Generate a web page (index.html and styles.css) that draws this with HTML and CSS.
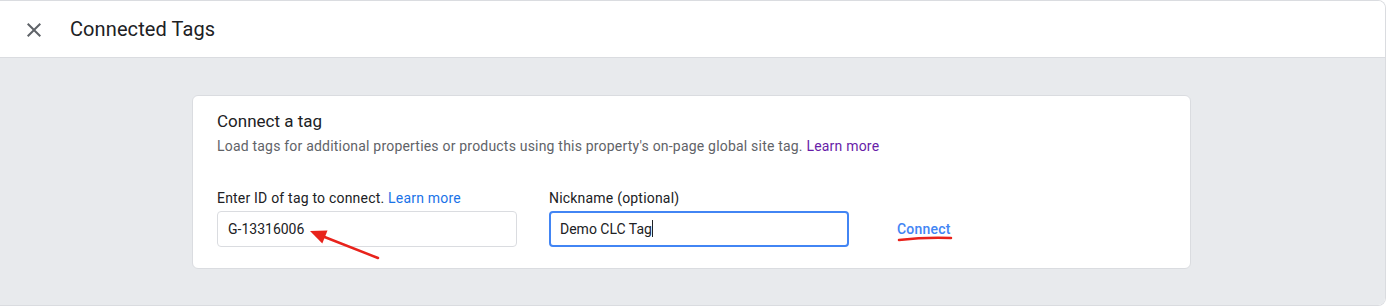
FILE: index.html
```html
<!DOCTYPE html>
<html lang="en">
<head>
    <meta charset="UTF-8">
    <meta name="viewport" content="width=device-width, initial-scale=1.0">
    <title>Connected Tags</title>
    <link rel="stylesheet" href="styles.css">
</head>
<body>

<div class="frame">
    <div class="header">
        <button class="close" aria-label="Close">
            <svg width="24" height="24" viewBox="0 0 24 24"><path d="M19 6.41L17.59 5 12 10.59 6.41 5 5 6.41 10.59 12 5 17.59 6.41 19 12 13.41 17.59 19 19 17.59 13.41 12z" fill="#5f6368"/></svg>
        </button>
        <h1>Connected Tags</h1>
    </div>

    <div class="content">
        <div class="card">
            <h2>Connect a tag</h2>
            <p class="desc">Load tags for additional properties or products using this property's on-page global site tag. <a href="#" class="visited">Learn more</a></p>

            <div class="form-row">
                <div class="field">
                    <label>Enter ID of tag to connect. <a href="#">Learn more</a></label>
                    <div class="input">G-13316006</div>
                    <svg class="arrow" width="90" height="40" viewBox="0 0 90 40">
                        <line x1="72" y1="33" x2="16" y2="11" stroke="#e8231c" stroke-width="2.5" stroke-linecap="round"/>
                        <path d="M4 6 L21.5 5.4 L16.3 18.4 Z" fill="#e8231c"/>
                    </svg>
                </div>
                <div class="field">
                    <label>Nickname (optional)</label>
                    <div class="input focused">Demo CLC Tag<span class="caret"></span></div>
                </div>
                <div class="action">
                    <button class="connect">Connect</button>
                    <svg class="underline" width="56" height="6" viewBox="0 0 56 6">
                        <path d="M2 4 Q28 1 54 2" stroke="#e8231c" stroke-width="2.5" fill="none" stroke-linecap="round"/>
                    </svg>
                </div>
            </div>
        </div>
    </div>
</div>

</body>
</html>
```

FILE: styles.css
```css
body {
    margin: 0;
    font-family: Roboto, "Liberation Sans", sans-serif;
    color: #202124;
    background: #fff;
}
.frame {
    width: 1385px;
    height: 304px;
    border: 1px solid #dadce0;
    border-left: none;
    border-radius: 0 8px 8px 0;
    overflow: hidden;
    display: flex;
    flex-direction: column;
}
.header {
    height: 56px;
    display: flex;
    align-items: center;
    background: #fff;
    border-bottom: 1px solid #dadce0;
}
.close {
    border: none;
    background: none;
    padding: 0;
    margin-left: 22px;
    width: 24px;
    height: 24px;
    margin-top: 2px;
}
.header h1 {
    font-size: 20px;
    font-weight: 400;
    margin: 0 0 0 24px;
    letter-spacing: 0.1px;
}
.content {
    flex: 1;
    background: #e8eaed;
    padding-top: 37px;
}
.card {
    width: 999px;
    margin: 0 0 0 192px;
    background: #fff;
    border: 1px solid #dadce0;
    border-radius: 6px;
    padding: 12px 24px 21px;
    box-sizing: border-box;
}
.card h2 {
    font-size: 17px;
    font-weight: 400;
    margin: 0;
    line-height: 26px;
}
.desc {
    font-size: 14px;
    color: #5f6368;
    margin: 0;
    line-height: 24px;
    letter-spacing: 0.2px;
}
a {
    color: #1a73e8;
    text-decoration: none;
}
a.visited {
    color: #681da8;
}
.form-row {
    display: flex;
    align-items: flex-end;
    margin-top: 30px;
}
.field {
    position: relative;
    width: 300px;
    margin-right: 32px;
}
.field label {
    display: block;
    font-size: 14px;
    line-height: 20px;
    margin-bottom: 3px;
    letter-spacing: 0.2px;
}
.input {
    height: 36px;
    box-sizing: border-box;
    border: 1px solid #dadce0;
    border-radius: 4px;
    font-size: 14px;
    line-height: 34px;
    padding: 0 10px;
}
.input.focused {
    border: 2px solid #4285f4;
    line-height: 32px;
    padding: 0 9px;
}
.caret {
    display: inline-block;
    width: 1px;
    height: 17px;
    background: #202124;
    vertical-align: -3px;
}
.arrow {
    position: absolute;
    left: 89px;
    top: 37px;
}
.action {
    position: relative;
    margin-left: 8px;
    height: 36px;
    display: flex;
    align-items: center;
}
.connect {
    border: none;
    background: none;
    font-family: Roboto, "Liberation Sans", sans-serif;
    font-size: 14px;
    font-weight: 500;
    color: #4285f4;
    padding: 0 8px;
    letter-spacing: 0.2px;
}
.underline {
    position: absolute;
    left: 8px;
    top: 25px;
}
```
